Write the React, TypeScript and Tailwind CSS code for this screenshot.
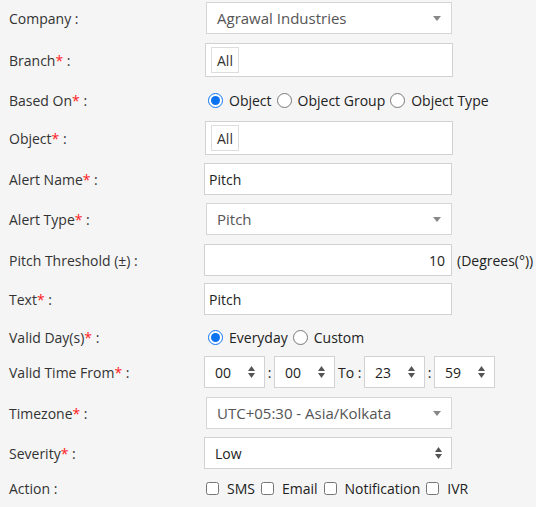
import React from "react";

const font = { fontFamily: '"Open Sans", "Noto Sans", sans-serif' };

function Label({ text, req }: { text: string; req?: boolean }) {
  return (
    <div className="w-[204px] shrink-0 pl-[9px] text-[14px] text-[#333]">
      {text}
      {req && <span className="text-[#ff2020]">*</span>} :
    </div>
  );
}

function Caret() {
  return (
    <svg width="8" height="5" viewBox="0 0 8 5" className="mr-[1px] shrink-0">
      <path d="M0 0 L8 0 L4 5 Z" fill="#888" />
    </svg>
  );
}

function Updown() {
  return (
    <svg width="7" height="12" viewBox="0 0 7 12" className="shrink-0">
      <path d="M0 5 L7 5 L3.5 0 Z" fill="#555" />
      <path d="M0 7 L7 7 L3.5 12 Z" fill="#555" />
    </svg>
  );
}

function Select2({ value }: { value: string }) {
  return (
    <div className="ml-[2px] flex h-[32px] w-[246px] items-center justify-between border border-[#d6d6d6] bg-white pl-[10px] pr-[9px] text-[15px] text-[#555]">
      <span>{value}</span>
      <Caret />
    </div>
  );
}

function TagBox() {
  return (
    <div className="flex h-[34px] w-[248px] items-center border border-[#d2d2d2] bg-white pl-[5px]">
      <span className="flex h-[26px] items-center border border-[#ddd] px-[5px] text-[14px] text-[#333]">
        All
      </span>
    </div>
  );
}

function TextBox({ value, right }: { value: string; right?: boolean }) {
  return (
    <div
      className={`flex h-[32px] w-[248px] items-center border border-[#d2d2d2] bg-white px-[4px] text-[14px] text-[#222] ${
        right ? "justify-end pr-[6px]" : ""
      }`}
    >
      {value}
    </div>
  );
}

function TimeBox({ value }: { value: string }) {
  return (
    <div className="flex h-[32px] w-[61px] items-center justify-between border border-[#d2d2d2] bg-white pl-[10px] pr-[9px] text-[14px] text-[#222]">
      <span>{value}</span>
      <Updown />
    </div>
  );
}

function Radio({ label, checked }: { label: string; checked?: boolean }) {
  return (
    <label className="flex items-center gap-[6px]">
      <input
        type="radio"
        readOnly
        checked={!!checked}
        className="m-0 h-[15px] w-[15px] accent-[#0b73f0]"
      />
      <span>{label}</span>
    </label>
  );
}

function Check({ label }: { label: string }) {
  return (
    <label className="flex items-center gap-[8px]">
      <input type="checkbox" readOnly className="m-0 h-[13px] w-[13px]" />
      <span>{label}</span>
    </label>
  );
}

export default function App() {
  return (
    <div className="h-[507px] w-[536px] overflow-hidden bg-[#f5f5f5]" style={font}>
      <div className="flex h-[36px] items-center">
        <Label text="Company" />
        <Select2 value="Agrawal Industries" />
      </div>
      <div className="flex h-[48px] items-center">
        <Label text="Branch" req />
        <div className="ml-[1px]">
          <TagBox />
        </div>
      </div>
      <div className="flex h-[32px] items-center">
        <Label text="Based On" req />
        <div className="ml-[4px] flex items-center gap-[5px] text-[14px] text-[#222]">
          <Radio label="Object" checked />
          <Radio label="Object Group" />
          <Radio label="Object Type" />
        </div>
      </div>
      <div className="flex h-[44px] items-center">
        <Label text="Object" req />
        <div className="ml-[1px]">
          <TagBox />
        </div>
      </div>
      <div className="flex h-[38px] items-center">
        <Label text="Alert Name" req />
        <TextBox value="Pitch" />
      </div>
      <div className="flex h-[42px] items-center">
        <Label text="Alert Type" req />
        <Select2 value="Pitch" />
      </div>
      <div className="flex h-[40px] items-center">
        <Label text="Pitch Threshold (±)" />
        <TextBox value="10" right />
        <span className="ml-[5px] text-[14px] text-[#222]">(Degrees(°))</span>
      </div>
      <div className="flex h-[38px] items-center">
        <Label text="Text" req />
        <TextBox value="Pitch" />
      </div>
      <div className="flex h-[38px] items-center">
        <Label text="Valid Day(s)" req />
        <div className="ml-[4px] flex items-center gap-[5px] text-[14px] text-[#222]">
          <Radio label="Everyday" checked />
          <Radio label="Custom" />
        </div>
      </div>
      <div className="flex h-[32px] items-center">
        <Label text="Valid Time From" req />
        <div className="flex items-center text-[14px] text-[#222]">
          <TimeBox value="00" />
          <span className="w-[9px] text-center">:</span>
          <TimeBox value="00" />
          <span className="w-[29px] pl-[3px]">To :</span>
          <TimeBox value="23" />
          <span className="w-[9px] text-center">:</span>
          <TimeBox value="59" />
        </div>
      </div>
      <div className="flex h-[50px] items-center">
        <Label text="Timezone" req />
        <Select2 value="UTC+05:30 - Asia/Kolkata" />
      </div>
      <div className="flex h-[30px] items-center">
        <Label text="Severity" req />
        <div className="flex h-[32px] w-[248px] items-center justify-between border border-[#d2d2d2] bg-white pl-[10px] pr-[9px] text-[14px] text-[#222]">
          <span>Low</span>
          <Updown />
        </div>
      </div>
      <div className="flex h-[40px] items-center">
        <Label text="Action" />
        <div className="ml-[2px] flex items-center gap-[6px] text-[14px] text-[#222]">
          <Check label="SMS" />
          <Check label="Email" />
          <Check label="Notification" />
          <Check label="IVR" />
        </div>
      </div>
    </div>
  );
}
